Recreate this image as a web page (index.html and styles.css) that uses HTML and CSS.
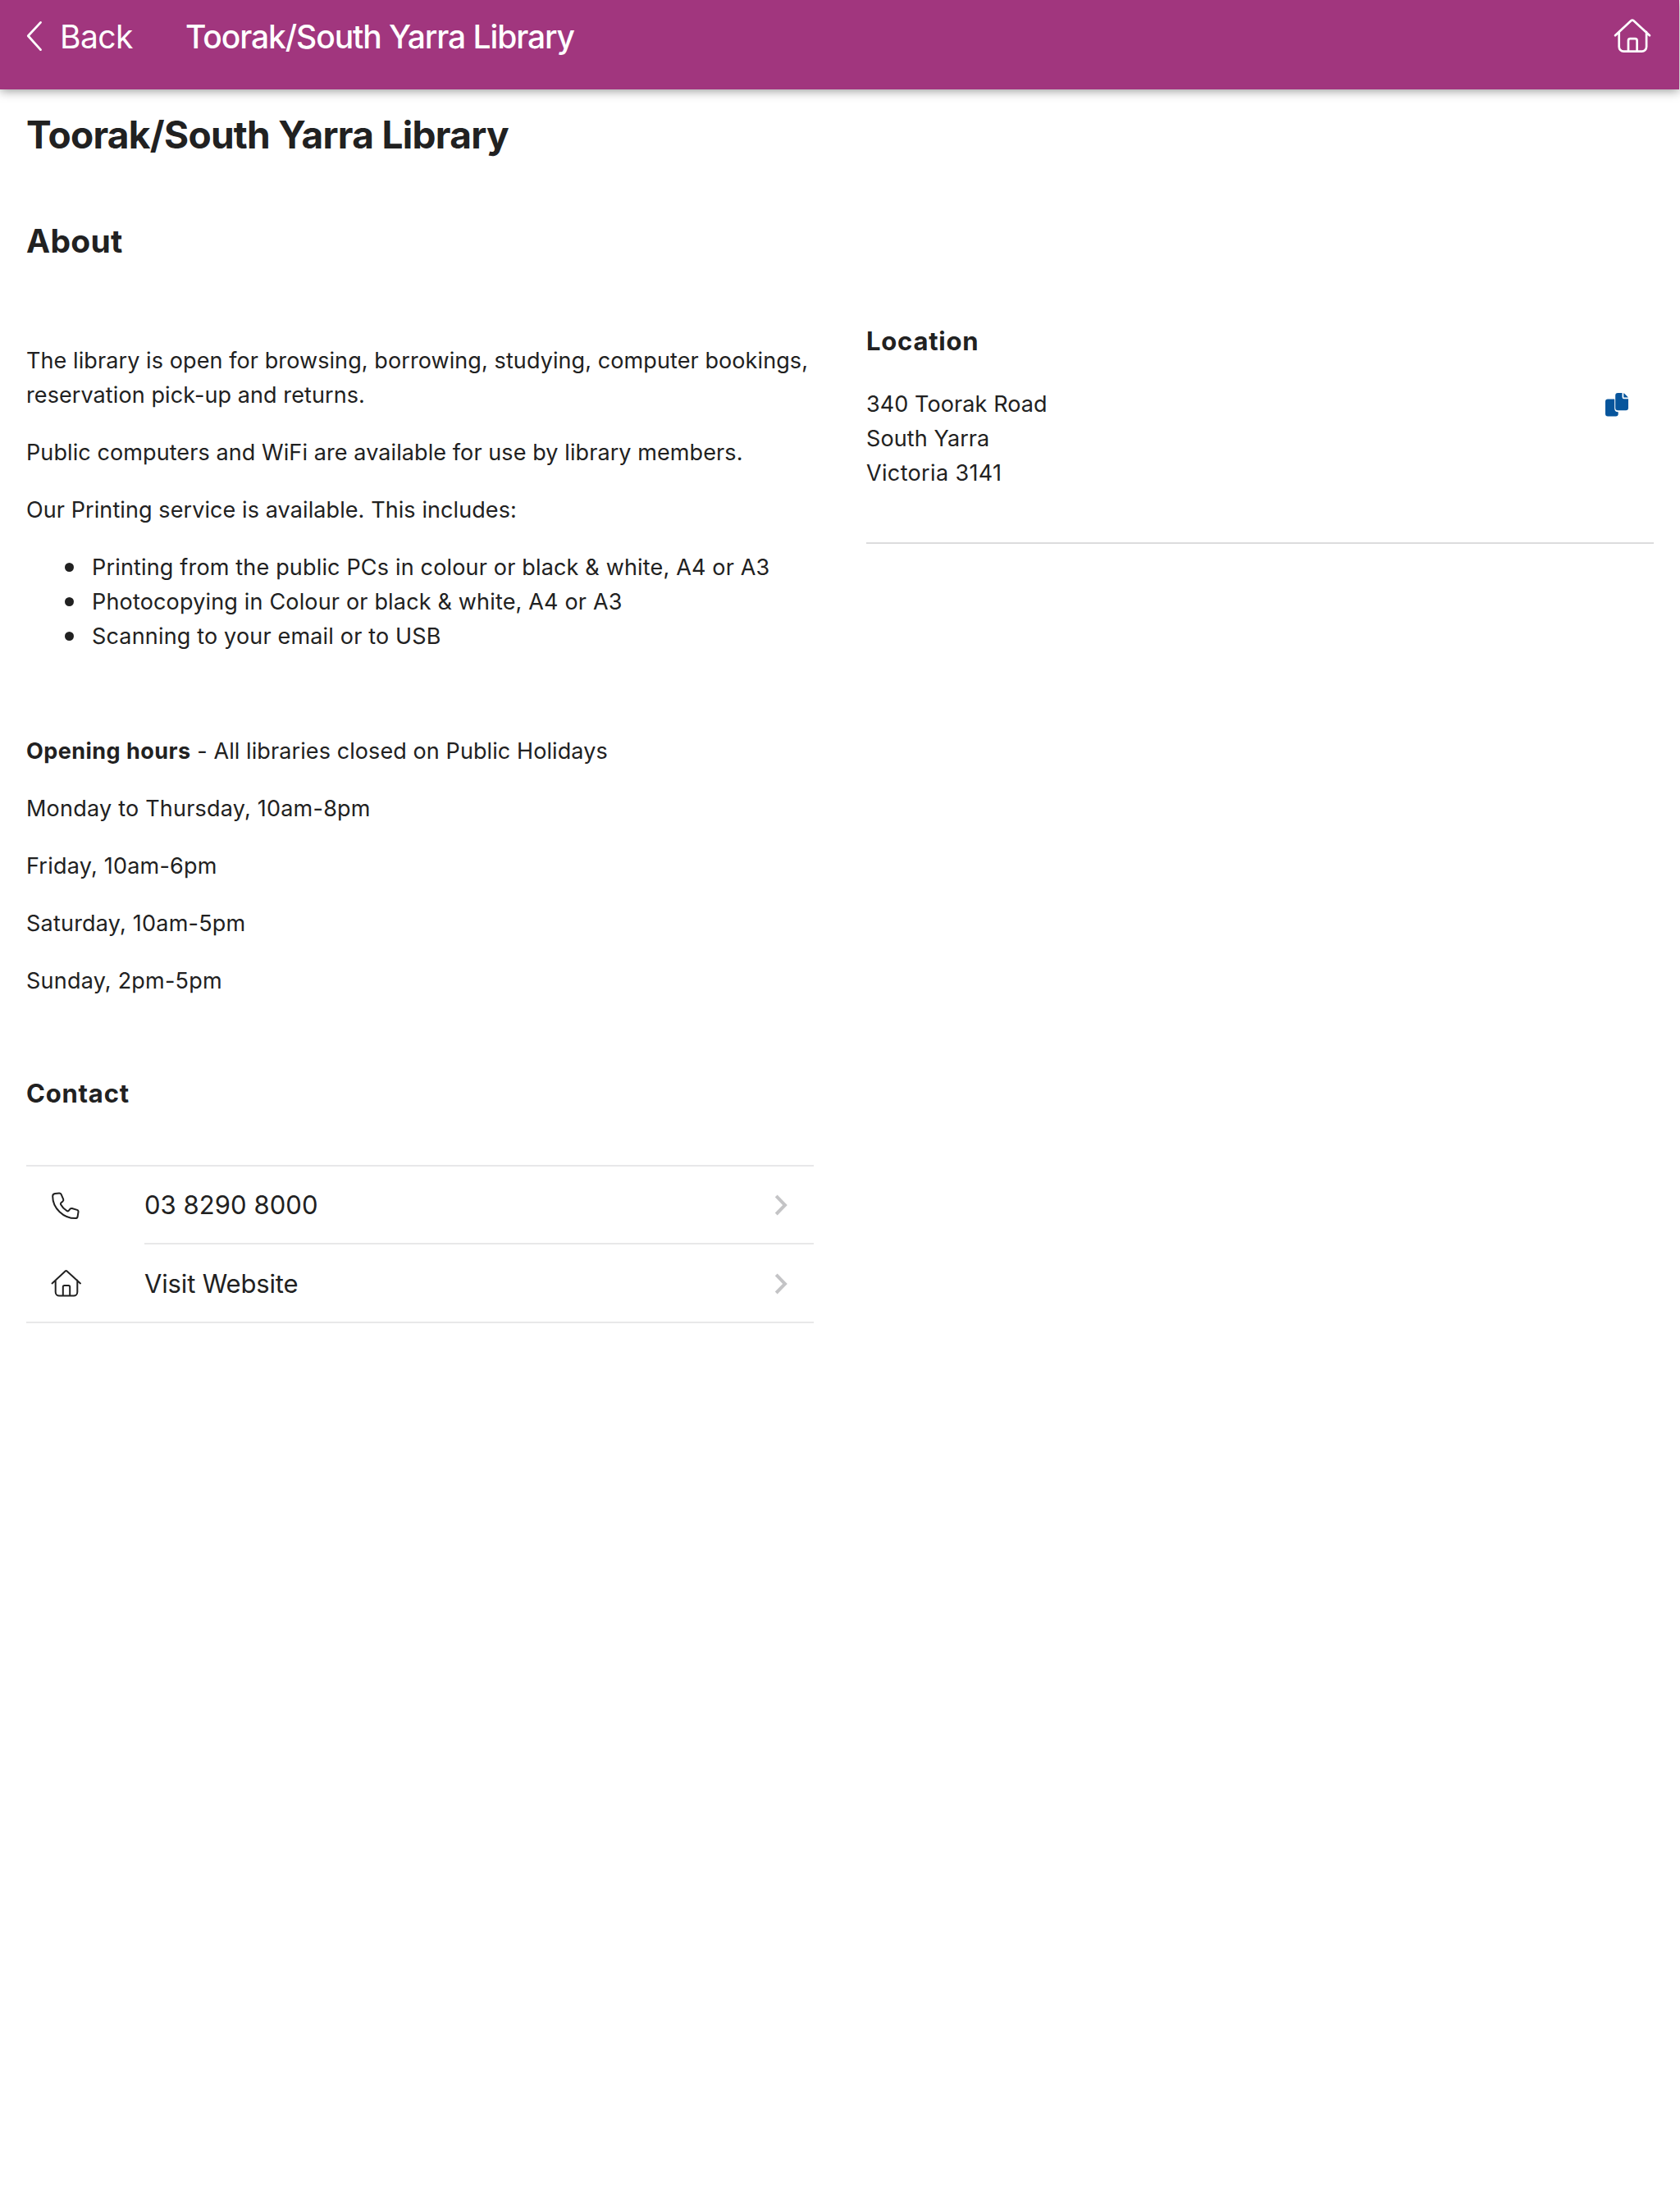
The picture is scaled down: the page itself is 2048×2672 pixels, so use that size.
FILE: index.html
```html
<!DOCTYPE html>
<html lang="en">
<head>
  <meta charset="utf-8">
  <title>Toorak/South Yarra Library</title>
  <link rel="stylesheet" href="styles.css">
</head>
<body>
  <header class="navbar">
    <a class="back">
      <svg class="back-icon" viewBox="0 0 20 38" width="20" height="38"><path d="M17.5 2.4 2.3 18.8 17.5 35.6"/></svg>
      <span>Back</span>
    </a>
    <div class="navbar-title">Toorak/South Yarra Library</div>
    <svg class="home-icon" viewBox="0 0 46 42" width="46" height="42">
      <path d="M2 21.2 21.3 3.3a2.4 2.4 0 0 1 3.2 0L44 21.2M6.7 17.2V35a5.6 5.6 0 0 0 5.6 5.6h22.2a5.6 5.6 0 0 0 5.6-5.6V17.2M18 40.6V27.4a2.3 2.3 0 0 1 2.3-2.3h6a2.3 2.3 0 0 1 2.3 2.3v13.2"/>
    </svg>
  </header>

  <main class="page">
    <h1>Toorak/South Yarra Library</h1>
    <h2>About</h2>

    <div class="columns">
      <section class="about">
        <div class="description">
          <p>The library is open for browsing, borrowing, studying, computer bookings,<br>reservation pick-up and returns.</p>
          <p>Public computers and WiFi are available for use by library members.</p>
          <p>Our Printing service is available. This includes:</p>
          <ul>
            <li>Printing from the public PCs in colour or black &amp; white, A4 or A3</li>
            <li>Photocopying in Colour or black &amp; white, A4 or A3</li>
            <li>Scanning to your email or to USB</li>
          </ul>
          <p>&nbsp;</p>
          <p><strong>Opening hours</strong> - All libraries closed on Public Holidays</p>
          <p class="hours">Monday to Thursday, 10am-8pm</p>
          <p class="hours">Friday, 10am-6pm</p>
          <p class="hours">Saturday, 10am-5pm</p>
          <p class="hours">Sunday, 2pm-5pm</p>
        </div>

        <h3 class="contact-title">Contact</h3>
        <div class="list">
          <a class="item">
            <svg class="item-icon" viewBox="0 0 38 34" width="38" height="34">
              <path d="M4.9 2.1 10 1.4Q11.9 1.2 12.6 2.8L15.2 8.8Q15.7 10.2 14.5 11.4L12.3 13.3Q11.6 14.2 12.1 15.3C13.9 18.7 17 21.6 19.7 23.2Q20.8 23.7 21.7 22.8L23.3 20.8Q24.3 19.7 25.8 20L32 21.9Q33.8 22.6 33.5 24.4L32.6 30Q32.3 32.1 29.8 32.1C15.5 32 2.2 20 2.2 5.2Q2.2 2.6 4.9 2.1Z"/>
            </svg>
            <span class="item-body phone">03 8290 8000
              <svg class="chevron" viewBox="0 0 16 26" width="16" height="26"><path d="M2.2 1.9 13 13 2.2 24"/></svg>
            </span>
          </a>
          <a class="item">
            <svg class="item-icon" viewBox="0 0 38 34" width="38" height="34">
              <path d="M1.5 17.4 17.6 2.6a1.5 1.5 0 0 1 2 0L36 17.4M5.7 13.8V28a4.5 4.5 0 0 0 4.5 4.5h17.6a4.5 4.5 0 0 0 4.5-4.5V13.8M14.8 32.5V21.8a1.7 1.7 0 0 1 1.7-1.7h5a1.7 1.7 0 0 1 1.7 1.7v10.7"/>
            </svg>
            <span class="item-body website">Visit Website
              <svg class="chevron" viewBox="0 0 16 26" width="16" height="26"><path d="M2.2 1.9 13 13 2.2 24"/></svg>
            </span>
          </a>
        </div>
      </section>

      <section class="location">
        <h3>Location</h3>
        <div class="address">
          <div>340 Toorak Road<br>South Yarra<br><span class="postcode-line">Victoria 3141</span></div>
          <svg class="copy-icon" viewBox="0 0 28 29" width="28" height="29">
            <path d="M3 7.6h8.2V19a4.5 4.5 0 0 0 4.5 4.3V25.6a3 3 0 0 1-3 3H3a3 3 0 0 1-3-3V10.6a3 3 0 0 1 3-3Z"/>
            <path d="M15.2 0h5.3v5A2.2 2.2 0 0 0 22.7 7.2H28V18.3a3 3 0 0 1-3 3H15.2a3 3 0 0 1-3-3V3a3 3 0 0 1 3-3Z"/>
            <path d="M22.3.3Q23 .5 23.5 1L27 4.4Q27.6 5 27.8 5.6H22.3Z"/>
          </svg>
        </div>
      </section>
    </div>
  </main>
</body>
</html>
```
FILE: styles.css
```css
* {
  box-sizing: border-box;
}

body {
  margin: 0;
  background: #fff;
  color: #212121;
  font-family: Inter, "Liberation Sans", sans-serif;
  font-size: 27px;
  line-height: 42px;
  letter-spacing: 0.09px;
}

svg {
  display: block;
  flex: none;
  fill: none;
  stroke: currentColor;
  stroke-linecap: round;
  stroke-linejoin: round;
}

.navbar {
  display: flex;
  align-items: flex-start;
  height: 109px;
  margin-right: 1px;
  padding: 21px 34px 0 32px;
  background: #a1367e;
  box-shadow: 0 2px 12px rgba(0, 0, 0, 0.4);
  color: #fff;
  font-size: 39px;
  line-height: 48px;
}

.back {
  display: flex;
  gap: 21px;
  width: 194px;
  letter-spacing: -0.56px;
}

.back-icon {
  margin-top: 4px;
  stroke-width: 2.8;
}

.navbar-title {
  flex: 1;
  font-weight: 500;
  letter-spacing: -1.1px;
}

.home-icon {
  margin-top: 1px;
  stroke-width: 2.7;
}

.page {
  padding: 27px 32px 0;
}

h1,
h2,
h3 {
  margin: 0;
  font-weight: 700;
}

h1 {
  font-size: 46px;
  line-height: 56px;
  letter-spacing: -0.7px;
}

h2 {
  margin-top: 78px;
  font-size: 39px;
  line-height: 48px;
  letter-spacing: 0.27px;
}

h3 {
  font-size: 31px;
  line-height: 38px;
  letter-spacing: 0.78px;
}

.columns {
  display: grid;
  grid-template-columns: 1fr 1fr;
  gap: 64px;
  align-items: start;
  margin-top: 78px;
}

.description {
  padding-top: 23px;
}

.description p,
.description ul {
  margin: 0 0 28px;
}

.description ul {
  padding-left: 80px;
  list-style: none;
  letter-spacing: 0.17px;
}

.description li::before {
  content: "";
  display: inline-block;
  width: 11px;
  height: 11px;
  margin: 0 22px 0 -33px;
  border-radius: 50%;
  background: currentColor;
  vertical-align: 4px;
}

.description strong {
  letter-spacing: 0.46px;
}

.description .hours {
  letter-spacing: 0.22px;
}

.contact-title {
  margin-top: 97px;
}

.list {
  margin-top: 68px;
  border-top: 2px solid #e8e8e9;
  border-bottom: 2px solid #e8e8e9;
  font-size: 31px;
}

.item {
  display: flex;
  align-items: center;
  padding-left: 30px;
}

.item-icon {
  margin-right: 76px;
  stroke-width: 2;
}

.item-body {
  display: flex;
  flex: 1;
  align-items: center;
  justify-content: space-between;
  height: 94px;
  padding-right: 32px;
}

.item:first-child .item-body {
  height: 95px;
  border-bottom: 2px solid #e8e8e9;
}

.phone {
  letter-spacing: 0.06px;
}

.website {
  padding-top: 1px;
  letter-spacing: -0.16px;
}

.chevron {
  color: #c4c4c6;
  stroke-width: 4;
  stroke-linecap: butt;
  stroke-linejoin: miter;
}

.location {
  padding-top: 1px;
}

.address {
  display: flex;
  justify-content: space-between;
  margin-top: 37px;
  padding: 0 31px 63px 0;
  border-bottom: 2px solid #dcdcdd;
}

.postcode-line {
  letter-spacing: 0.35px;
}

.copy-icon {
  margin-top: 7px;
  color: #07559c;
  fill: currentColor;
  stroke: none;
}
```
